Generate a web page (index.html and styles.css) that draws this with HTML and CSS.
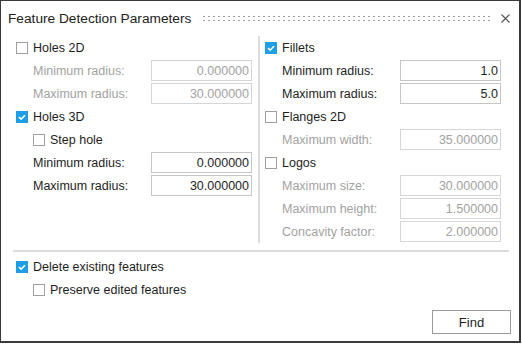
FILE: index.html
```html
<!DOCTYPE html>
<html>
<head>
	<meta charset="UTF-8">
	<title>Feature Detection Parameters</title>
	<link rel="stylesheet" href="styles.css">
</head>
<body>
	<div class="dialog">
		<div class="titlebar">
			<span class="title">Feature Detection Parameters</span>
			<svg class="grip" height="6">
				<defs>
					<pattern id="dots" width="5" height="4" patternUnits="userSpaceOnUse">
						<rect width="2" height="1" fill="#9c9c9c" />
					</pattern>
				</defs>
				<rect width="100%" height="6" fill="url(#dots)" />
			</svg>
			<svg class="close" width="9" height="9" viewBox="0 0 9 9">
				<path d="M0.5 0.5 L8.5 8.5 M8.5 0.5 L0.5 8.5" stroke="#555" stroke-width="1.1" fill="none" />
			</svg>
		</div>

		<div class="columns">
			<div class="col">
				<div class="row"><span class="box"></span><span class="label">Holes 2D</span></div>
				<div class="row field off"><span class="label">Minimum radius:</span><input type="text" value="0.000000" disabled></div>
				<div class="row field off"><span class="label">Maximum radius:</span><input type="text" value="30.000000" disabled></div>
				<div class="row"><span class="box on"></span><span class="label">Holes 3D</span></div>
				<div class="row sub"><span class="box"></span><span class="label">Step hole</span></div>
				<div class="row field"><span class="label">Minimum radius:</span><input type="text" value="0.000000"></div>
				<div class="row field"><span class="label">Maximum radius:</span><input type="text" value="30.000000"></div>
			</div>
			<div class="vline"></div>
			<div class="col">
				<div class="row"><span class="box on"></span><span class="label">Fillets</span></div>
				<div class="row field"><span class="label">Minimum radius:</span><input type="text" value="1.0"></div>
				<div class="row field"><span class="label">Maximum radius:</span><input type="text" value="5.0"></div>
				<div class="row"><span class="box"></span><span class="label">Flanges 2D</span></div>
				<div class="row field off"><span class="label">Maximum width:</span><input type="text" value="35.000000" disabled></div>
				<div class="row"><span class="box"></span><span class="label">Logos</span></div>
				<div class="row field off"><span class="label">Maximum size:</span><input type="text" value="30.000000" disabled></div>
				<div class="row field off"><span class="label">Maximum height:</span><input type="text" value="1.500000" disabled></div>
				<div class="row field off"><span class="label">Concavity factor:</span><input type="text" value="2.000000" disabled></div>
			</div>
		</div>

		<div class="hline"></div>

		<div class="options">
			<div class="row"><span class="box on"></span><span class="label">Delete existing features</span></div>
			<div class="row sub"><span class="box"></span><span class="label">Preserve edited features</span></div>
		</div>

		<div class="footer">
			<button class="find">Find</button>
		</div>
	</div>
</body>
</html>
```

FILE: styles.css
```css
* {
	margin: 0;
	padding: 0;
	box-sizing: border-box;
}

body {
	background: white;
	font-family: "Liberation Sans", Arial, sans-serif;
	font-size: 12.5px;
	color: #1e1e1e;
}

.dialog {
	width: 521px;
	height: 343px;
	border: 1px solid #3a3a3a;
	border-right-width: 2px;
	border-bottom-width: 2px;
	display: flex;
	flex-direction: column;
}

/* title bar */
.titlebar {
	height: 35px;
	display: flex;
	align-items: center;
	padding: 0 9px 0 7px;
}

.title {
	font-size: 13.7px;
	color: #222;
}

.grip {
	flex: 1;
	margin: 1px 9px 0 12px;
}

.close {
	flex: none;
}

/* two columns */
.columns {
	display: flex;
	padding-left: 15px;
}

.col {
	width: 236px;
}

.vline {
	width: 2px;
	background: #dcdcdc;
	margin: 0 5px 0 6px;
}

.row {
	height: 23px;
	display: flex;
	align-items: center;
}

.row .label {
	margin-left: 5px;
}

.sub {
	padding-left: 17px;
}

.field {
	padding-left: 17px;
}

.field .label {
	flex: 1;
	margin-left: 0;
}

.field input {
	width: 101px;
	height: 21px;
	border: 1px solid #c6c6c6;
	background: white;
	font-family: inherit;
	font-size: 12.5px;
	color: #1e1e1e;
	text-align: right;
	padding-right: 2px;
	outline: none;
}

.off .label {
	color: #a2a2a2;
}

.off input {
	border-color: #d6d6d6;
	color: #a2a2a2;
}

/* checkbox */
.box {
	width: 12px;
	height: 12px;
	border: 1px solid #a0a0a0;
	background: white;
	flex: none;
}

.box.on {
	border: none;
	background: #1e9ee6 url("data:image/svg+xml,%3Csvg xmlns='http://www.w3.org/2000/svg' width='12' height='12'%3E%3Cpath d='M3 6.2 L5.1 8.2 L9 4.2' stroke='white' stroke-width='1.6' fill='none'/%3E%3C/svg%3E") no-repeat center;
}

.hline {
	height: 2px;
	background: #dcdcdc;
	margin: 7px 10px 0 12px;
}

.options {
	padding-left: 15px;
	margin-top: 3px;
}

.footer {
	display: flex;
	justify-content: flex-end;
	padding-right: 8px;
	margin-top: 9px;
}

.find {
	width: 79px;
	height: 24px;
	border: 1px solid #9a9a9a;
	background: white;
	font-family: inherit;
	font-size: 13px;
	color: #1e1e1e;
}
```
